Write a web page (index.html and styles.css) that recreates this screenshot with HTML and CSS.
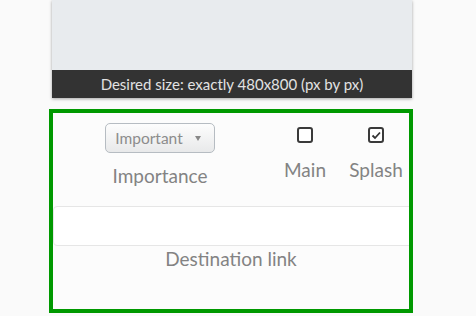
FILE: index.html
```html
<!DOCTYPE html>
<html>
<head>
<title>Slide settings</title>
<link rel="stylesheet" href="styles.css">
</head>
<body>

<div class="preview">
	<div class="preview-image"></div>
	<div class="preview-caption">Desired size: exactly 480x800 (px by px)</div>
</div>

<div class="settings">
	<div class="flags">
		<div class="cell cell-importance">
			<span class="picker">Important <span class="caret"></span></span>
			<label>Importance</label>
		</div>
		<div class="cell cell-main">
			<span class="box"></span>
			<label>Main</label>
		</div>
		<div class="cell cell-splash">
			<span class="box">
				<svg width="12" height="12" viewBox="0 0 12 12"><polyline points="2.5,6.5 5,9 10,3.5" fill="none" stroke="#333" stroke-width="1.8"/></svg>
			</span>
			<label>Splash</label>
		</div>
	</div>
	<input class="link" type="text" value="">
	<div class="link-label">Destination link</div>
</div>

</body>
</html>
```

FILE: styles.css
```css
body {
	margin: 0;
	background: #fafafa;
	font-family: Lato, "Open Sans", sans-serif;
	color: #838383;
}

.preview {
	margin-left: 52px;
	width: 360px;
	box-shadow: 0 1px 3px rgba(0, 0, 0, 0.35);
}

.preview-image {
	height: 70px;
	background: #e8ebee;
}

.preview-caption {
	height: 28px;
	line-height: 28px;
	background: #333;
	color: #e2e2e2;
	font-size: 15px;
	text-align: center;
}

.settings {
	margin: 11px 0 0 49px;
	width: 364px;
	height: 204px;
	box-sizing: border-box;
	border: 4px solid #009900;
	background: #fcfcfc;
	overflow: hidden;
}

.flags {
	display: flex;
	height: 93px;
}

.cell {
	display: flex;
	flex-direction: column;
	align-items: center;
}

.cell label {
	font-size: 19px;
	line-height: 22px;
}

.cell-importance {
	width: 214px;
	padding-top: 10px;
}

.cell-importance label {
	margin-top: 12px;
}

.cell-main {
	width: 76px;
	padding-top: 14px;
}

.cell-splash {
	width: 66px;
	padding-top: 14px;
}

.cell-main label,
.cell-splash label {
	margin-top: 16px;
}

.picker {
	display: flex;
	align-items: center;
	justify-content: center;
	gap: 12px;
	width: 110px;
	height: 30px;
	box-sizing: border-box;
	padding-right: 4px;
	border: 1px solid #b6bcc2;
	border-radius: 5px;
	background: linear-gradient(#fdfdfd, #e8e9ea);
	font-size: 15.5px;
	color: #8c8c8c;
}

.caret {
	width: 0;
	height: 0;
	border-left: 3.5px solid transparent;
	border-right: 3.5px solid transparent;
	border-top: 5px solid #888;
}

.box {
	display: flex;
	align-items: center;
	justify-content: center;
	width: 16px;
	height: 16px;
	box-sizing: border-box;
	border: 2px solid #3a3a3a;
	border-radius: 3px;
	background: #fff;
}

.link {
	display: block;
	width: 370px;
	height: 40px;
	box-sizing: border-box;
	margin: 0;
	border: 1px solid #e6e6e6;
	border-radius: 4px;
	background: #fff;
}

.link-label {
	margin-top: 2px;
	text-align: center;
	font-size: 19px;
	line-height: 22px;
}
```
